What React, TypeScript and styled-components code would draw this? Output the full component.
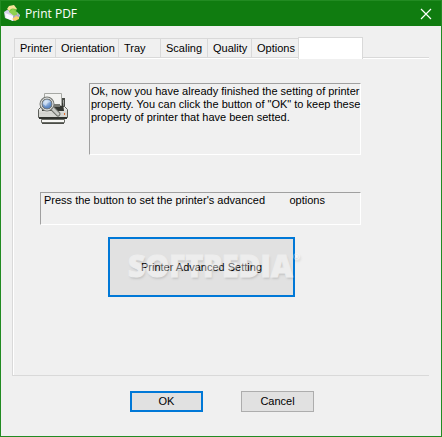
import React, { useState } from "react";
import styled, { createGlobalStyle } from "styled-components";

const GlobalStyle = createGlobalStyle`
  * { box-sizing: border-box; }
  body {
    margin: 0;
    background: #f0f0f0;
    color: #000;
    font: 11px/13px "Liberation Sans", sans-serif;
  }
  button { font: inherit; color: inherit; }
`;

const Dialog = styled.main`
  display: flex;
  flex-direction: column;
  min-height: 100vh;
  border: 1px solid #228b22;
  background: #f0f0f0;
`;

const TitleBar = styled.header`
  display: flex;
  align-items: center;
  height: 25px;
  padding: 0 9px 0 3px;
  gap: 5px;
  background: #107c10;
  color: #fff;
`;

const Title = styled.h1`
  flex: 1;
  margin: 0;
  font: 12px/16px "Open Sans", sans-serif;
`;

const CloseButton = styled.button`
  display: flex;
  padding: 0;
  border: 0;
  background: none;
`;

const Content = styled.div`
  flex: 1;
  padding: 11px 12px 0 11px;
`;

const TabList = styled.div`
  display: flex;
  align-items: flex-end;
  height: 20px;
  padding-left: 2px;
`;

const Tab = styled.button<{ $width: number; $active: boolean }>`
  position: relative;
  flex: 0 0 auto;
  width: ${(p) => p.$width}px;
  height: ${(p) => (p.$active ? 22 : 19)}px;
  margin-bottom: ${(p) => (p.$active ? -2 : 0)}px;
  padding: 0 0 0 5px;
  border: 1px solid #d9d9d9;
  border-width: ${(p) => (p.$active ? "1px 1px 0" : "1px 0 0 1px")};
  background: ${(p) => (p.$active ? "#fff" : "#f0f0f0")};
  text-align: left;
  white-space: nowrap;
`;

const Panel = styled.section`
  display: flex;
  flex-direction: column;
  min-height: 319px;
  padding: 25px 68px 0 25px;
  border: 1px solid #d9d9d9;
  border-right: 0;
  box-shadow: inset 1px 1px #fff;
`;

const Summary = styled.div`
  display: flex;
  align-items: flex-start;
  gap: 21px;
`;

const PrinterIcon = styled.svg`
  flex: none;
  margin-top: 10px;
`;

const Sunken = styled.div<{ $height: number; $indent: number }>`
  min-height: ${(p) => p.$height}px;
  padding: 1px 0 0 ${(p) => p.$indent}px;
  border: 1px solid;
  border-color: #a0a0a0 #fff #fff #a0a0a0;
  white-space: pre;
`;

const Message = styled(Sunken)`
  flex: 1;
  min-width: 0;
`;

const Hint = styled(Sunken)`
  margin: 37px 0 12px 2px;
`;

const PushButton = styled.button<{ $primary?: boolean }>`
  width: 73px;
  height: 21px;
  padding: 0;
  border: ${(p) => (p.$primary ? "2px solid #0078d7" : "1px solid #adadad")};
  background: #e1e1e1;
`;

const Advanced = styled.div`
  position: relative;
  align-self: flex-start;
  margin-left: 70px;
`;

const AdvancedButton = styled(PushButton)`
  display: block;
  width: 187px;
  height: 60px;
`;

const Watermark = styled.span`
  position: absolute;
  left: 20px;
  top: 8px;
  font: 800 30px/42px "Open Sans", sans-serif;
  color: #fff;
  -webkit-text-stroke: 1px #fff;
  text-shadow: 1px 2px 2px rgba(0, 0, 0, 0.3);
  opacity: 0.4;
  pointer-events: none;
  white-space: nowrap;
`;

const Registered = styled.sup`
  font-size: 9px;
  line-height: 9px;
  vertical-align: 17px;
  -webkit-text-stroke: 0;
`;

const Footer = styled.footer`
  display: flex;
  gap: 38px;
  padding: 15px 0 23px 118px;
`;

const tabs = [
  { name: "Printer", width: 41 },
  { name: "Orientation", width: 63 },
  { name: "Tray", width: 42 },
  { name: "Scaling", width: 47 },
  { name: "Quality", width: 44 },
  { name: "Options", width: 47 },
  { name: "", width: 65 },
];

export default function App() {
  const [active, setActive] = useState(6);
  return (
    <>
      <GlobalStyle />
      <Dialog>
        <TitleBar>
          <svg width="16" height="17" viewBox="0 0 16 17" aria-hidden="true">
            <path d="M3 4 5 1l5-1 3 4-5 4z" fill="#f6e39a" />
            <path d="M0 7 3 5l10 2 3 3-1 3-6 3-8-3z" fill="#d8d3ee" />
            <path d="m1 8 8 3v5l-7-3z" fill="#fafaff" />
            <path d="m9 11 6-2v4l-6 3z" fill="#aaa5cc" />
            <path d="M5 7q1-5 7-3l1 6-4-2z" fill="#75c63e" />
            <path d="M5 7 9 4l5 5-4 2z" fill="#8fd050" />
            <path d="m8 14 4-3 3 1v2l-4 2z" fill="#f8d06e" />
          </svg>
          <Title>Print PDF</Title>
          <CloseButton aria-label="Close">
            <svg width="12" height="12" viewBox="0 0 12 12">
              <path d="m1 1 10 10M11 1 1 11" stroke="#fff" strokeWidth="1.2" />
            </svg>
          </CloseButton>
        </TitleBar>
        <Content>
          <TabList role="tablist">
            {tabs.map((tab, i) => (
              <Tab
                key={i}
                id={`tab-${i}`}
                role="tab"
                aria-selected={active === i}
                aria-controls="panel"
                aria-label={tab.name || "Finish"}
                $width={tab.width}
                $active={active === i}
                onClick={() => setActive(i)}
              >
                {tab.name}
              </Tab>
            ))}
          </TabList>
          <Panel id="panel" role="tabpanel" aria-labelledby={`tab-${active}`}>
            <Summary>
              <PrinterIcon width="30" height="31" viewBox="0 0 30 31" aria-hidden="true">
                <defs>
                  <linearGradient id="body" x2="0" y2="1">
                    <stop stopColor="#f4f4f1" />
                    <stop offset="1" stopColor="#bcbdb9" />
                  </linearGradient>
                  <radialGradient id="lens" cx=".4" cy=".3">
                    <stop stopColor="#c9def4" />
                    <stop offset="1" stopColor="#5c87c4" />
                  </radialGradient>
                </defs>
                <path d="M23 5h4v12h-4z" fill="#4a4c48" />
                <path d="M25 7h1v7h-1z" fill="#a5a7a2" />
                <path d="M.5 24.5v-8l3-3h23l3 3v8z" fill="url(#body)" stroke="#5d5f5a" />
                <path d="M5 10h20l1 8H4z" fill="#343631" />
                <path d="M6.5.5h17v12h-17z" fill="#f3f3f1" stroke="#a6a8a4" />
                <path d="M8 11h14v3H8z" fill="#777973" />
                <path d="M1 21h28v3H1z" fill="#d5d6d2" />
                <path d="M1 24h28v2H1z" fill="#30322e" />
                <path d="M3.5 26.5h23v3h-23z" fill="#f7f7f5" stroke="#696b65" />
                <path d="M4 30.5h22" stroke="#4b4d48" />
                <path d="M26 20h1v2h-1z" fill="#e66b28" />
                <path d="m14 15 6 6" stroke="#686b65" strokeWidth="5" strokeLinecap="round" />
                <path d="m14 15 6 6" stroke="#c8cac6" strokeWidth="3" strokeLinecap="round" />
                <circle cx="9" cy="11" r="6" fill="url(#lens)" stroke="#747671" strokeWidth="3" />
                <circle cx="9" cy="11" r="6" fill="none" stroke="#eef1f3" />
                <path d="M5 11q0-4 4-4 3 0 4 2-4 0-5 4z" fill="#e8f1fb" opacity=".55" />
              </PrinterIcon>
              <Message $height={72} $indent={1}>
                <div>Ok, now you have already finished the setting of printer</div>
                <div>property. You can click the button of "OK" to keep these</div>
                <div>property of printer that have been setted.</div>
              </Message>
            </Summary>
            <Hint $height={33} $indent={3}>
              {"Press the button to set the printer's advanced        options"}
            </Hint>
            <Advanced>
              <AdvancedButton $primary>Printer Advanced Setting</AdvancedButton>
              <Watermark aria-hidden="true">
                SOFTPEDIA<Registered>®</Registered>
              </Watermark>
            </Advanced>
          </Panel>
          <Footer>
            <PushButton $primary>OK</PushButton>
            <PushButton>Cancel</PushButton>
          </Footer>
        </Content>
      </Dialog>
    </>
  );
}
